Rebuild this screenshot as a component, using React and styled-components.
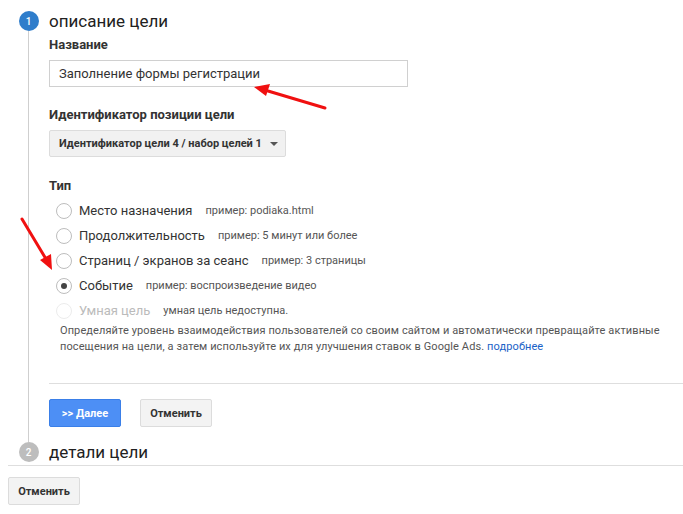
import styled, { createGlobalStyle } from 'styled-components';

const GlobalStyle = createGlobalStyle`
  html, body { margin: 0; padding: 0; background: #fff; }
  body { font-family: Roboto, "Noto Sans", Arial, sans-serif; color: #333; }
`;

const Page = styled.div`
  position: relative;
  width: 683px;
  height: 514px;
  overflow: hidden;
  padding: 11px 0 0 8px;
  box-sizing: border-box;
`;

const Step = styled.div`
  display: flex;
`;

const Rail = styled.div`
  width: 41px;
  flex: none;
  display: flex;
  flex-direction: column;
  align-items: center;
`;

const Circle = styled.div`
  width: 20px;
  height: 20px;
  border-radius: 50%;
  background: ${p => (p.$active ? '#2f7dcb' : '#bdbdbd')};
  color: #fff;
  font-size: 10px;
  font-weight: 500;
  display: flex;
  align-items: center;
  justify-content: center;
  flex: none;
`;

const Line = styled.div`
  flex: 1;
  width: 1px;
  background: #cfcfcf;
`;

const Body = styled.div`
  flex: 1;
  display: flex;
  flex-direction: column;
`;

const StepTitle = styled.div`
  font-size: 17px;
  line-height: 20px;
  color: #212121;
`;

const Label = styled.div`
  font-size: 13px;
  font-weight: 700;
  line-height: 16px;
  color: #333;
  margin-top: ${p => p.$top || 0}px;
`;

const Input = styled.div`
  margin-top: 7px;
  width: 359px;
  height: 27px;
  box-sizing: border-box;
  border: 1px solid #d0d0d0;
  padding: 0 9px;
  font-size: 13px;
  line-height: 25px;
  color: #333;
`;

const Dropdown = styled.div`
  margin-top: 7px;
  align-self: flex-start;
  height: 27px;
  box-sizing: border-box;
  border: 1px solid #dcdcdc;
  border-radius: 2px;
  background: #f1f1f1;
  display: flex;
  align-items: center;
  gap: 8px;
  padding: 0 7px 0 9px;
  font-size: 11px;
  font-weight: 700;
  color: #333;
`;

const Caret = styled.span`
  width: 0;
  height: 0;
  border-left: 4px solid transparent;
  border-right: 4px solid transparent;
  border-top: 4px solid #555;
`;

const RadioList = styled.div`
  margin-top: 4px;
  padding-left: 7px;
  display: flex;
  flex-direction: column;
`;

const RadioRow = styled.div`
  height: 25px;
  display: flex;
  align-items: center;
`;

const Radio = styled.span`
  width: 14px;
  height: 14px;
  border-radius: 50%;
  border: 1px solid ${p => (p.$disabled ? '#ececec' : '#bdbdbd')};
  display: flex;
  align-items: center;
  justify-content: center;
  margin-right: 7px;
  flex: none;

  &::after {
    content: '';
    width: 6px;
    height: 6px;
    border-radius: 50%;
    background: ${p => (p.$checked ? '#444' : 'transparent')};
  }
`;

const RadioText = styled.span`
  font-size: 13px;
  color: ${p => (p.$disabled ? '#bbb' : '#333')};
  margin-right: 13px;
`;

const Example = styled.span`
  font-size: 11px;
  color: #555;
`;

const Help = styled.p`
  margin: 0 0 0 11px;
  font-size: 11px;
  line-height: 16px;
  color: #555;
  width: 622px;
  letter-spacing: 0.1px;
`;

const Link = styled.a`
  color: #1a62c7;
  text-decoration: none;
`;

const Divider = styled.div`
  height: 1px;
  background: #dedede;
  margin-top: ${p => p.$top || 0}px;
`;

const Buttons = styled.div`
  display: flex;
  gap: 19px;
  margin-top: ${p => p.$top || 15}px;
  margin-bottom: 15px;
`;

const Button = styled.button`
  height: 28px;
  width: ${p => p.$w}px;
  padding: 0;
  border-radius: 2px;
  border: 1px solid ${p => (p.$primary ? '#3a7fe8' : '#dcdcdc')};
  background: ${p => (p.$primary ? '#4d8ff5' : '#f3f3f3')};
  color: ${p => (p.$primary ? '#fff' : '#333')};
  font-family: inherit;
  font-size: 11px;
  font-weight: 700;
  white-space: nowrap;
  cursor: pointer;
`;

const Step2Row = styled.div`
  display: flex;
  align-items: center;
`;

const Arrows = styled.svg`
  position: absolute;
  left: 0;
  top: 0;
  pointer-events: none;
`;

const types = [
  { name: 'Место назначения', ex: 'пример: podiaka.html' },
  { name: 'Продолжительность', ex: 'пример: 5 минут или более' },
  { name: 'Страниц / экранов за сеанс', ex: 'пример: 3 страницы' },
  { name: 'Событие', ex: 'пример: воспроизведение видео', checked: true },
  { name: 'Умная цель', ex: 'умная цель недоступна.', disabled: true },
];

const App = () => {
  return (
    <Page>
      <GlobalStyle />
      <Step>
        <Rail>
          <Circle $active>1</Circle>
          <Line />
        </Rail>
        <Body>
          <StepTitle>описание цели</StepTitle>
          <Label $top={6}>Название</Label>
          <Input>Заполнение формы регистрации</Input>
          <Label $top={20}>Идентификатор позиции цели</Label>
          <Dropdown>
            Идентификатор цели 4 / набор целей 1
            <Caret />
          </Dropdown>
          <Label $top={21}>Тип</Label>
          <RadioList>
            {types.map(t => (
              <RadioRow key={t.name}>
                <Radio $checked={t.checked} $disabled={t.disabled} />
                <RadioText $disabled={t.disabled}>{t.name}</RadioText>
                <Example>{t.ex}</Example>
              </RadioRow>
            ))}
          </RadioList>
          <Help>
            Определяйте уровень взаимодействия пользователей со своим сайтом и автоматически превращайте активные
            посещения на цели, а затем используйте их для улучшения ставок в Google Ads. <Link href="#">подробнее</Link>
          </Help>
          <Divider $top={28} />
          <Buttons>
            <Button $primary $w={72}>&gt;&gt; Далее</Button>
            <Button $w={72}>Отменить</Button>
          </Buttons>
        </Body>
      </Step>
      <Step2Row>
        <Rail>
          <Circle>2</Circle>
        </Rail>
        <StepTitle>детали цели</StepTitle>
      </Step2Row>
      <Divider $top={3} />
      <Buttons $top={11}>
        <Button $w={72}>Отменить</Button>
      </Buttons>
      <Arrows width="683" height="514">
        <line x1="325" y1="108" x2="268" y2="91" stroke="#f01010" strokeWidth="3" strokeLinecap="round" />
        <polygon points="254,87 270,84 266,96" fill="#f01010" />
        <line x1="22" y1="219" x2="46" y2="259" stroke="#f01010" strokeWidth="3" strokeLinecap="round" />
        <polygon points="52,270 40,260 51,254" fill="#f01010" />
      </Arrows>
    </Page>
  );
};

export default App;
